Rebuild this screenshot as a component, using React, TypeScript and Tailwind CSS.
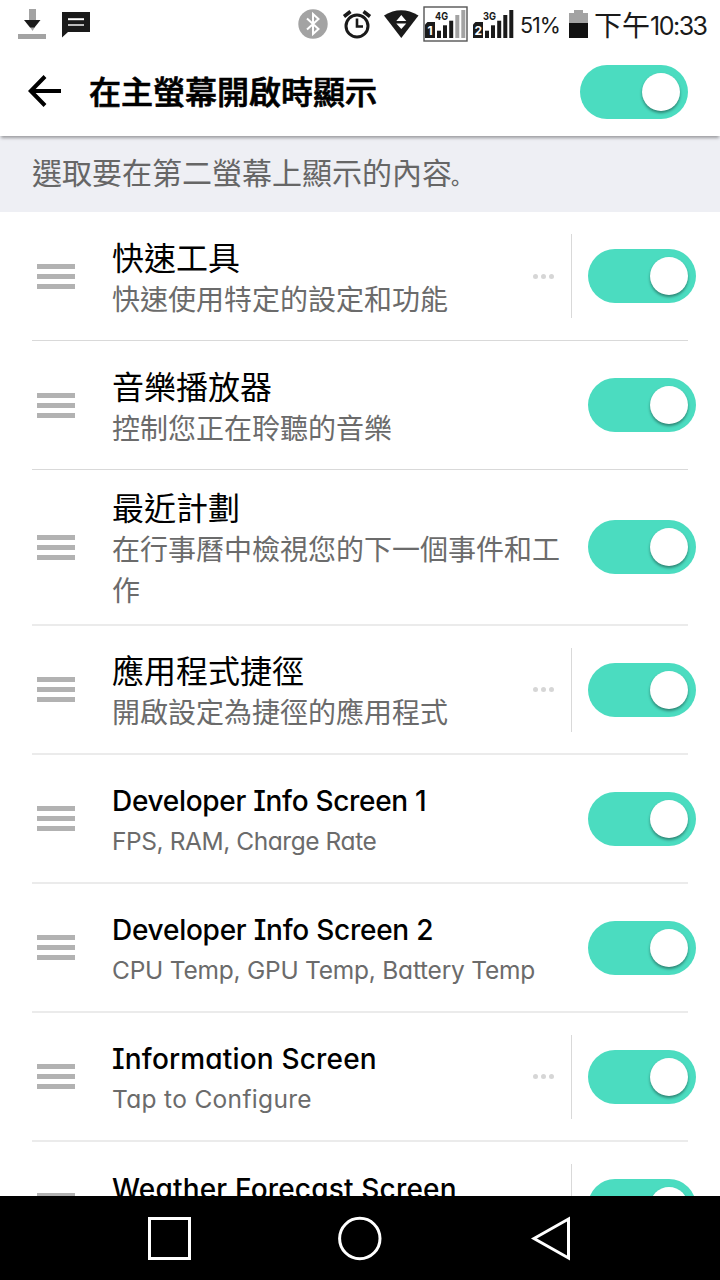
import type { JSX } from "react";

interface ScreenItem {
    id: number;
    title: string;
    subtitle?: string;
    titleClass?: string;
    subtitleClass?: string;
    configurable?: boolean;
}

const latinTitle = "text-[28px] font-medium pt-[5px] -mb-[4px]";
const latinSubtitle = "text-[24.5px] pt-[2px]";

const items: ScreenItem[] = [
    { id: 1, title: "快速工具", subtitle: "快速使用特定的設定和功能", configurable: true },
    { id: 2, title: "音樂播放器", subtitle: "控制您正在聆聽的音樂" },
    { id: 3, title: "最近計劃", subtitle: "在行事曆中檢視您的下一個事件和工作" },
    { id: 4, title: "應用程式捷徑", subtitle: "開啟設定為捷徑的應用程式", configurable: true },
    { id: 5, title: "Developer Info Screen 1", subtitle: "FPS, RAM, Charge Rate", titleClass: `${latinTitle} tracking-[-0.3px]`, subtitleClass: `${latinSubtitle} tracking-[-0.43px]` },
    { id: 6, title: "Developer Info Screen 2", subtitle: "CPU Temp, GPU Temp, Battery Temp", titleClass: `${latinTitle} tracking-[-0.25px]`, subtitleClass: `${latinSubtitle} tracking-[-0.23px]` },
    { id: 7, title: "Information Screen", subtitle: "Tap to Configure", titleClass: `${latinTitle} tracking-[0.17px]`, subtitleClass: `${latinSubtitle} tracking-[0.32px]`, configurable: true },
    { id: 8, title: "Weather Forecast Screen", titleClass: `${latinTitle} tracking-[0.18px]`, configurable: true },
];

const Toggle = (): JSX.Element => (
    <button className="flex h-[54px] w-[108px] shrink-0 items-center justify-end rounded-full bg-[#4bdcc0] pr-2">
        <span className="size-[38px] rounded-full bg-white shadow-[0_2px_3px_rgba(0,0,0,0.4)]" />
    </button>
);

const Signal = ({ label, sim, weak }: { label: string; sim: string; weak?: boolean }): JSX.Element => (
    <svg width="45" height="36" viewBox="0 0 45 36" fill="#1a1a1a">
        {weak && <rect x="1" y="1" width="43" height="34" fill="none" stroke="#555" strokeWidth="1.4" />}
        <path d="M2 18.5 4.5 16H12v16H2z" />
        <text x="7.2" y="29" fontSize="12" fontWeight="700" fill="#fff" textAnchor="middle">{sim}</text>
        <text x="12" y="14" fontSize="11" fontWeight="700" textLength="13" lengthAdjust="spacingAndGlyphs">{label}</text>
        <rect x="14" y="24.7" width="4" height="7.3" />
        <rect x="20" y="19.3" width="4" height="12.7" />
        <rect x="26.2" y="14.7" width="4" height="17.3" />
        <rect x="32.3" y="9" width="4" height="23" fill={weak ? "#a3a3a3" : "#1a1a1a"} />
        <rect x="38.3" y="4" width="4" height="28" fill={weak ? "#a3a3a3" : "#1a1a1a"} />
    </svg>
);

const StatusBar = (): JSX.Element => (
    <div className="flex h-12 shrink-0 items-center pl-[18px] text-[#1a1a1a]">
        <svg className="-mt-px" width="28" height="30" viewBox="0 0 28 30">
            <path d="M11 0h7v11h-7zM12 18h5l-2.5 4zM0 25h28v5H0z" fill="#a3a3a3" />
            <path d="M6 11h16.500l-6 7.500h-4.500z" fill="#1a1a1a" />
        </svg>
        <svg className="ml-4" width="28" height="27" viewBox="0 0 28 27">
            <path d="M0 1h28v20H6l-6 5.500z" fill="#1a1a1a" />
            <path d="M6 7.200h16v2H6z" fill="#fff" />
            <path d="M6 13h16v2H6z" fill="#bbb" />
        </svg>
        <svg className="ml-[208px]" width="30" height="30" viewBox="0 0 30 30" fill="none">
            <circle cx="15" cy="15" r="14.700" fill="#a3a3a3" />
            <path d="M9 9.500 20.500 20 15 25V5l5.500 5L9 20.500" stroke="#fff" strokeWidth="2" />
        </svg>
        <svg className="ml-[14px]" width="30" height="30" viewBox="0 0 30 30" fill="none" stroke="#1a1a1a">
            <circle cx="15" cy="17" r="11" strokeWidth="3" />
            <path d="M15 9.500v8h6" strokeWidth="2.600" />
            <path d="m2 7.500 6.500-5M28 7.500l-6.500-5" strokeWidth="3.600" />
        </svg>
        <svg className="ml-3" width="35" height="30" viewBox="0 0 35 30">
            <path d="M0 6.500Q17 -4 34.500 6.500L17.300 29z" fill="#1a1a1a" />
            <path d="m17.300 6 5 6h-10zM12.300 14.500h10l-5 5.500z" fill="#fff" />
        </svg>
        <div className="ml-1 flex gap-[3px]">
            <Signal label="4G" sim="1" weak />
            <Signal label="3G" sim="2" />
        </div>
        <span className="mt-[3px] ml-1 w-[42px] text-[21.5px] tracking-[-1px] whitespace-nowrap">51%</span>
        <svg className="ml-[7px]" width="19" height="28" viewBox="0 0 19 28">
            <path d="M5 0h9v3h5v10H0V3h5z" fill="#a3a3a3" />
            <path d="M0 13h19v15H0z" fill="#111" />
        </svg>
        <span className="mt-[3px] ml-[6px] text-[28px] whitespace-nowrap">下午</span>
        <span className="mt-[5px] text-[25px] tracking-[-1.500px] whitespace-nowrap">10:33</span>
    </div>
);

const Header = (): JSX.Element => (
    <header className="relative flex h-[88px] shrink-0 items-center justify-between bg-white pr-8 pl-7 shadow-[0_3px_3px_-1px_rgba(0,0,0,0.35)]">
        <div className="flex items-center">
            <svg className="-mt-[3px]" width="33" height="32" viewBox="0 0 33 32" fill="none" stroke="#000" strokeWidth="4">
                <path d="M33 16H3M17 1.500 2.800 16 17 30.500" />
            </svg>
            <h1 className="mt-[2px] ml-7 text-[32px] leading-10 font-medium [-webkit-text-stroke:0.7px_#000]">在主螢幕開啟時顯示</h1>
        </div>
        <Toggle />
    </header>
);

const ScreenRow = ({ item }: { item: ScreenItem }): JSX.Element => {
    const border = item.id < 3 ? "border-b border-[#d9d9d9]" : "border-b-2 border-[#ebebeb]";
    const height = item.id === 3 ? "h-[156px]" : "h-[129px]";
    const textTop = item.titleClass ? "" : item.id === 3 ? "pt-[2px]" : "pt-[5px]";

    return (
        <li className={`mx-8 flex shrink-0 items-center ${border} ${height}`}>
            <div className="ml-[5px] flex w-[38px] shrink-0 flex-col gap-[5px]">
                <span className="h-[5px] bg-[#b2b2b2]" />
                <span className="h-[5px] bg-[#b2b2b2]" />
                <span className="h-[5px] bg-[#b2b2b2]" />
            </div>
            <div className={`ml-[37px] shrink-0 ${textTop} ${item.configurable ? "w-[420px]" : "w-[460px]"}`}>
                <div className={`leading-[43px] text-black ${item.titleClass ?? "text-[32px]"}`}>{item.title}</div>
                <div className={`min-h-[43px] leading-[41px] text-[#6b6b6b] ${item.subtitleClass ?? "-mb-[2px] text-[28px]"}`}>{item.subtitle}</div>
            </div>
            {item.configurable && (
                <div className="flex h-[84px] w-10 shrink-0 items-center gap-[3px] border-r border-[#d9d9d9] pl-[0.5px]">
                    <span className="size-[5px] rounded-full bg-[#d6d6d6]" />
                    <span className="size-[5px] rounded-full bg-[#d6d6d6]" />
                    <span className="size-[5px] rounded-full bg-[#d6d6d6]" />
                </div>
            )}
            <div className="-mr-2 ml-4 shrink-0">
                <Toggle />
            </div>
        </li>
    );
};

const NavBar = (): JSX.Element => (
    <nav className="flex h-[84px] shrink-0 items-center bg-black pl-[147px]">
        <svg width="45" height="45" viewBox="0 0 45 45" fill="none" stroke="#fff" strokeWidth="3">
            <rect x="2.500" y="2.500" width="40" height="40" />
        </svg>
        <svg className="ml-[145px]" width="45" height="45" viewBox="0 0 45 45" fill="none" stroke="#fff" strokeWidth="3">
            <circle cx="22.800" cy="22.500" r="20.200" />
        </svg>
        <svg className="ml-[148px]" width="42" height="45" viewBox="0 0 42 45" fill="none" stroke="#fff" strokeWidth="3">
            <path d="M4 22.500 38.500 3v39z" />
        </svg>
    </nav>
);

export default function App(): JSX.Element {
    return (
        <div lang="zh-Hant" className="flex h-[1280px] w-[720px] flex-col overflow-hidden bg-white font-[Inter,'Noto_Sans_CJK_TC',sans-serif] [font-feature-settings:'cv08','cv11']">
            <StatusBar />
            <Header />
            <main className="flex min-h-0 flex-1 flex-col overflow-hidden">
                <p className="flex h-[76px] shrink-0 items-center bg-[#eeeff4] pb-[2px] pl-8 text-[30px] text-[#666]">
                    選取要在第二螢幕上顯示的內容<span className="-ml-px pt-[6px] font-['Noto_Sans_CJK_JP',sans-serif] text-[21px] font-medium" lang="ja">。</span>
                </p>
                <ul className="flex flex-col">
                    {items.map((item: ScreenItem) => (
                        <ScreenRow key={item.id} item={item} />
                    ))}
                </ul>
            </main>
            <NavBar />
        </div>
    );
}
